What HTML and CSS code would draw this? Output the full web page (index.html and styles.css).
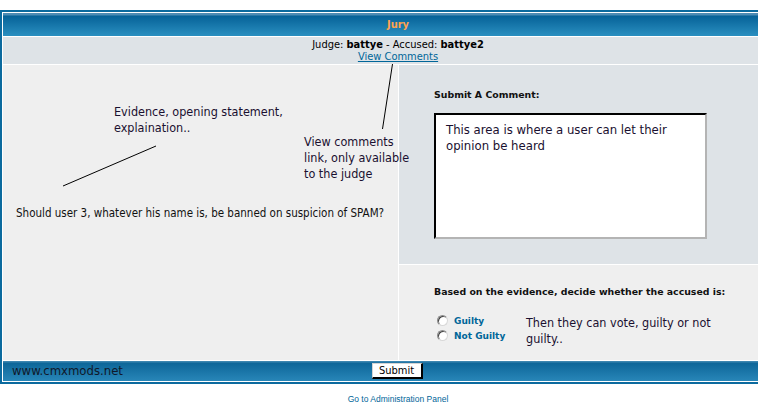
FILE: index.html
```html
<!DOCTYPE html>
<html>
	<head>
		<meta charset="UTF-8">
		<title>Jury</title>
		<link rel="stylesheet" href="styles.css">
	</head>
	<body>
		<div class="forumline">
			<div class="th">Jury</div>
			<div class="info">
				<div>Judge: <b>battye</b> - Accused: <b>battye2</b></div>
				<a href="#">View Comments</a>
			</div>
			<div class="main">
				<div class="left">
					<span class="question">Should user 3, whatever his name is, be banned on suspicion of SPAM?</span>
				</div>
				<div class="right">
					<div class="comment">
						<div class="label">Submit A Comment:</div>
						<textarea class="post" readonly>This area is where a user can let their opinion be heard</textarea>
					</div>
					<div class="vote">
						<div class="label">Based on the evidence, decide whether the accused is:</div>
						<div class="choices">
							<ul class="radios">
								<li><input type="radio" name="verdict"><span>Guilty</span></li>
								<li><input type="radio" name="verdict"><span>Not Guilty</span></li>
							</ul>
							<div class="note">Then they can vote, guilty or not guilty..</div>
						</div>
					</div>
				</div>
			</div>
			<div class="catbottom">
				<span class="site">www.cmxmods.net</span>
				<button class="submit">Submit</button>
			</div>
		</div>
		<div class="admin"><a href="#">Go to Administration Panel</a></div>

		<!-- notes drawn over the screenshot -->
		<div class="note note-evidence">Evidence, opening statement,<br>explaination..</div>
		<div class="note note-view">View comments<br>link, only available<br>to the judge</div>
		<svg class="marks" width="758" height="403">
			<line x1="392.5" y1="64" x2="382.5" y2="129" stroke="#000" stroke-width="1" />
			<line x1="63" y1="186" x2="156" y2="146" stroke="#000" stroke-width="1" />
		</svg>
	</body>
</html>
```

FILE: styles.css
```css
html {
	overflow: hidden;
}

body {
	margin: 0;
	background: #FFFFFF;
	font-family: "DejaVu Sans Condensed", "DejaVu Sans", sans-serif;
	font-stretch: condensed;
	color: #000000;
	position: relative;
	width: 758px;
	height: 403px;
}

a {
	color: #006699;
}

.forumline {
	box-sizing: border-box;
	width: 796px;
	margin-top: 10px;
	border: 2px solid #0b6a9e;
	padding: 1px;
	background: #FFFFFF;
	display: grid;
	row-gap: 1px;
}

.th {
	height: 23px;
	background: linear-gradient(#4d8cb4 0, #4d8cb4 2px, #066298 3px, #2a8fc0 100%);
	color: #FFA34F;
	font-weight: bold;
	font-size: 11px;
	display: flex;
	align-items: center;
	justify-content: center;
}

.info {
	height: 27px;
	background: #DEE3E7;
	font-size: 11px;
	line-height: 12px;
	display: flex;
	flex-direction: column;
	align-items: center;
	justify-content: center;
}

.main {
	display: grid;
	grid-template-columns: 395px 1fr;
	column-gap: 1px;
	height: 295px;
}

.left {
	background: #EFEFEF;
	display: flex;
	align-items: center;
	padding-left: 13px;
}

.question {
	font-size: 11.5px;
	color: #111111;
}

.right {
	display: grid;
	grid-template-rows: 199px 95px;
	row-gap: 1px;
}

.comment {
	background: #DEE3E7;
	padding: 24px 0 0 35px;
}

.label {
	font-family: "DejaVu Sans", sans-serif;
	font-stretch: normal;
	font-weight: bold;
	font-size: 9.4px;
	line-height: 12px;
	color: #111111;
}

.post {
	display: block;
	box-sizing: border-box;
	width: 273px;
	height: 126px;
	margin-top: 12px;
	padding: 7px 10px;
	border: 2px solid;
	border-color: #000000 #b4b4b4 #b4b4b4 #000000;
	background: #FFFFFF;
	font-family: "DejaVu Sans Condensed", "DejaVu Sans", sans-serif;
	font-stretch: condensed;
	font-size: 13px;
	line-height: 16px;
	color: #1a1030;
	resize: none;
	overflow: hidden;
	outline: none;
}

.vote {
	background: #EFEFEF;
	padding: 21px 0 0 35px;
}

.choices {
	display: flex;
	margin-top: 15px;
}

.radios {
	margin: 0;
	padding: 0;
	list-style: none;
	width: 92px;
}

.radios li {
	display: flex;
	align-items: center;
	height: 15px;
}

.radios input {
	appearance: none;
	-webkit-appearance: none;
	box-sizing: border-box;
	width: 11px;
	height: 11px;
	margin: 0 6px 0 3px;
	border-radius: 50%;
	border: 1px solid #8a8a8a;
	border-right-color: #d8d8d8;
	border-bottom-color: #d8d8d8;
	background: #FFFFFF;
	box-shadow: inset 1px 1px 0 #444444;
}

.radios span {
	font-family: "DejaVu Sans", sans-serif;
	font-stretch: normal;
	font-weight: bold;
	font-size: 9px;
	color: #006699;
}

.note {
	font-size: 12.5px;
	line-height: 16px;
	color: #1a1030;
}

.choices .note {
	margin-top: 2px;
	width: 200px;
}

.note-evidence {
	position: absolute;
	left: 114px;
	top: 104px;
}

.note-view {
	position: absolute;
	left: 304px;
	top: 134px;
}

.marks {
	position: absolute;
	left: 0;
	top: 0;
	pointer-events: none;
}

.catbottom {
	height: 20px;
	background: linear-gradient(#3d86b0 0, #3d86b0 1px, #0d6699 2px, #2886b8 100%);
	display: flex;
	align-items: center;
	justify-content: center;
	position: relative;
}

.site {
	position: absolute;
	left: 9px;
	top: 1px;
	font-size: 13px;
	line-height: 18px;
	color: #10182a;
}

.submit {
	box-sizing: border-box;
	width: 51px;
	height: 16px;
	margin-right: 2px;
	padding: 0;
	border: 1px solid;
	border-width: 1px 2px 2px 1px;
	border-color: #d4d4d4 #000000 #000000 #d4d4d4;
	background: #FFFFFF;
	font-family: "DejaVu Sans Condensed", "DejaVu Sans", sans-serif;
	font-stretch: condensed;
	font-size: 11px;
	color: #000000;
}

.admin {
	width: 796px;
	text-align: center;
	margin-top: 10px;
	font-family: "Liberation Sans", sans-serif;
	font-size: 8.5px;
}

.admin a {
	text-decoration: none;
}
```
